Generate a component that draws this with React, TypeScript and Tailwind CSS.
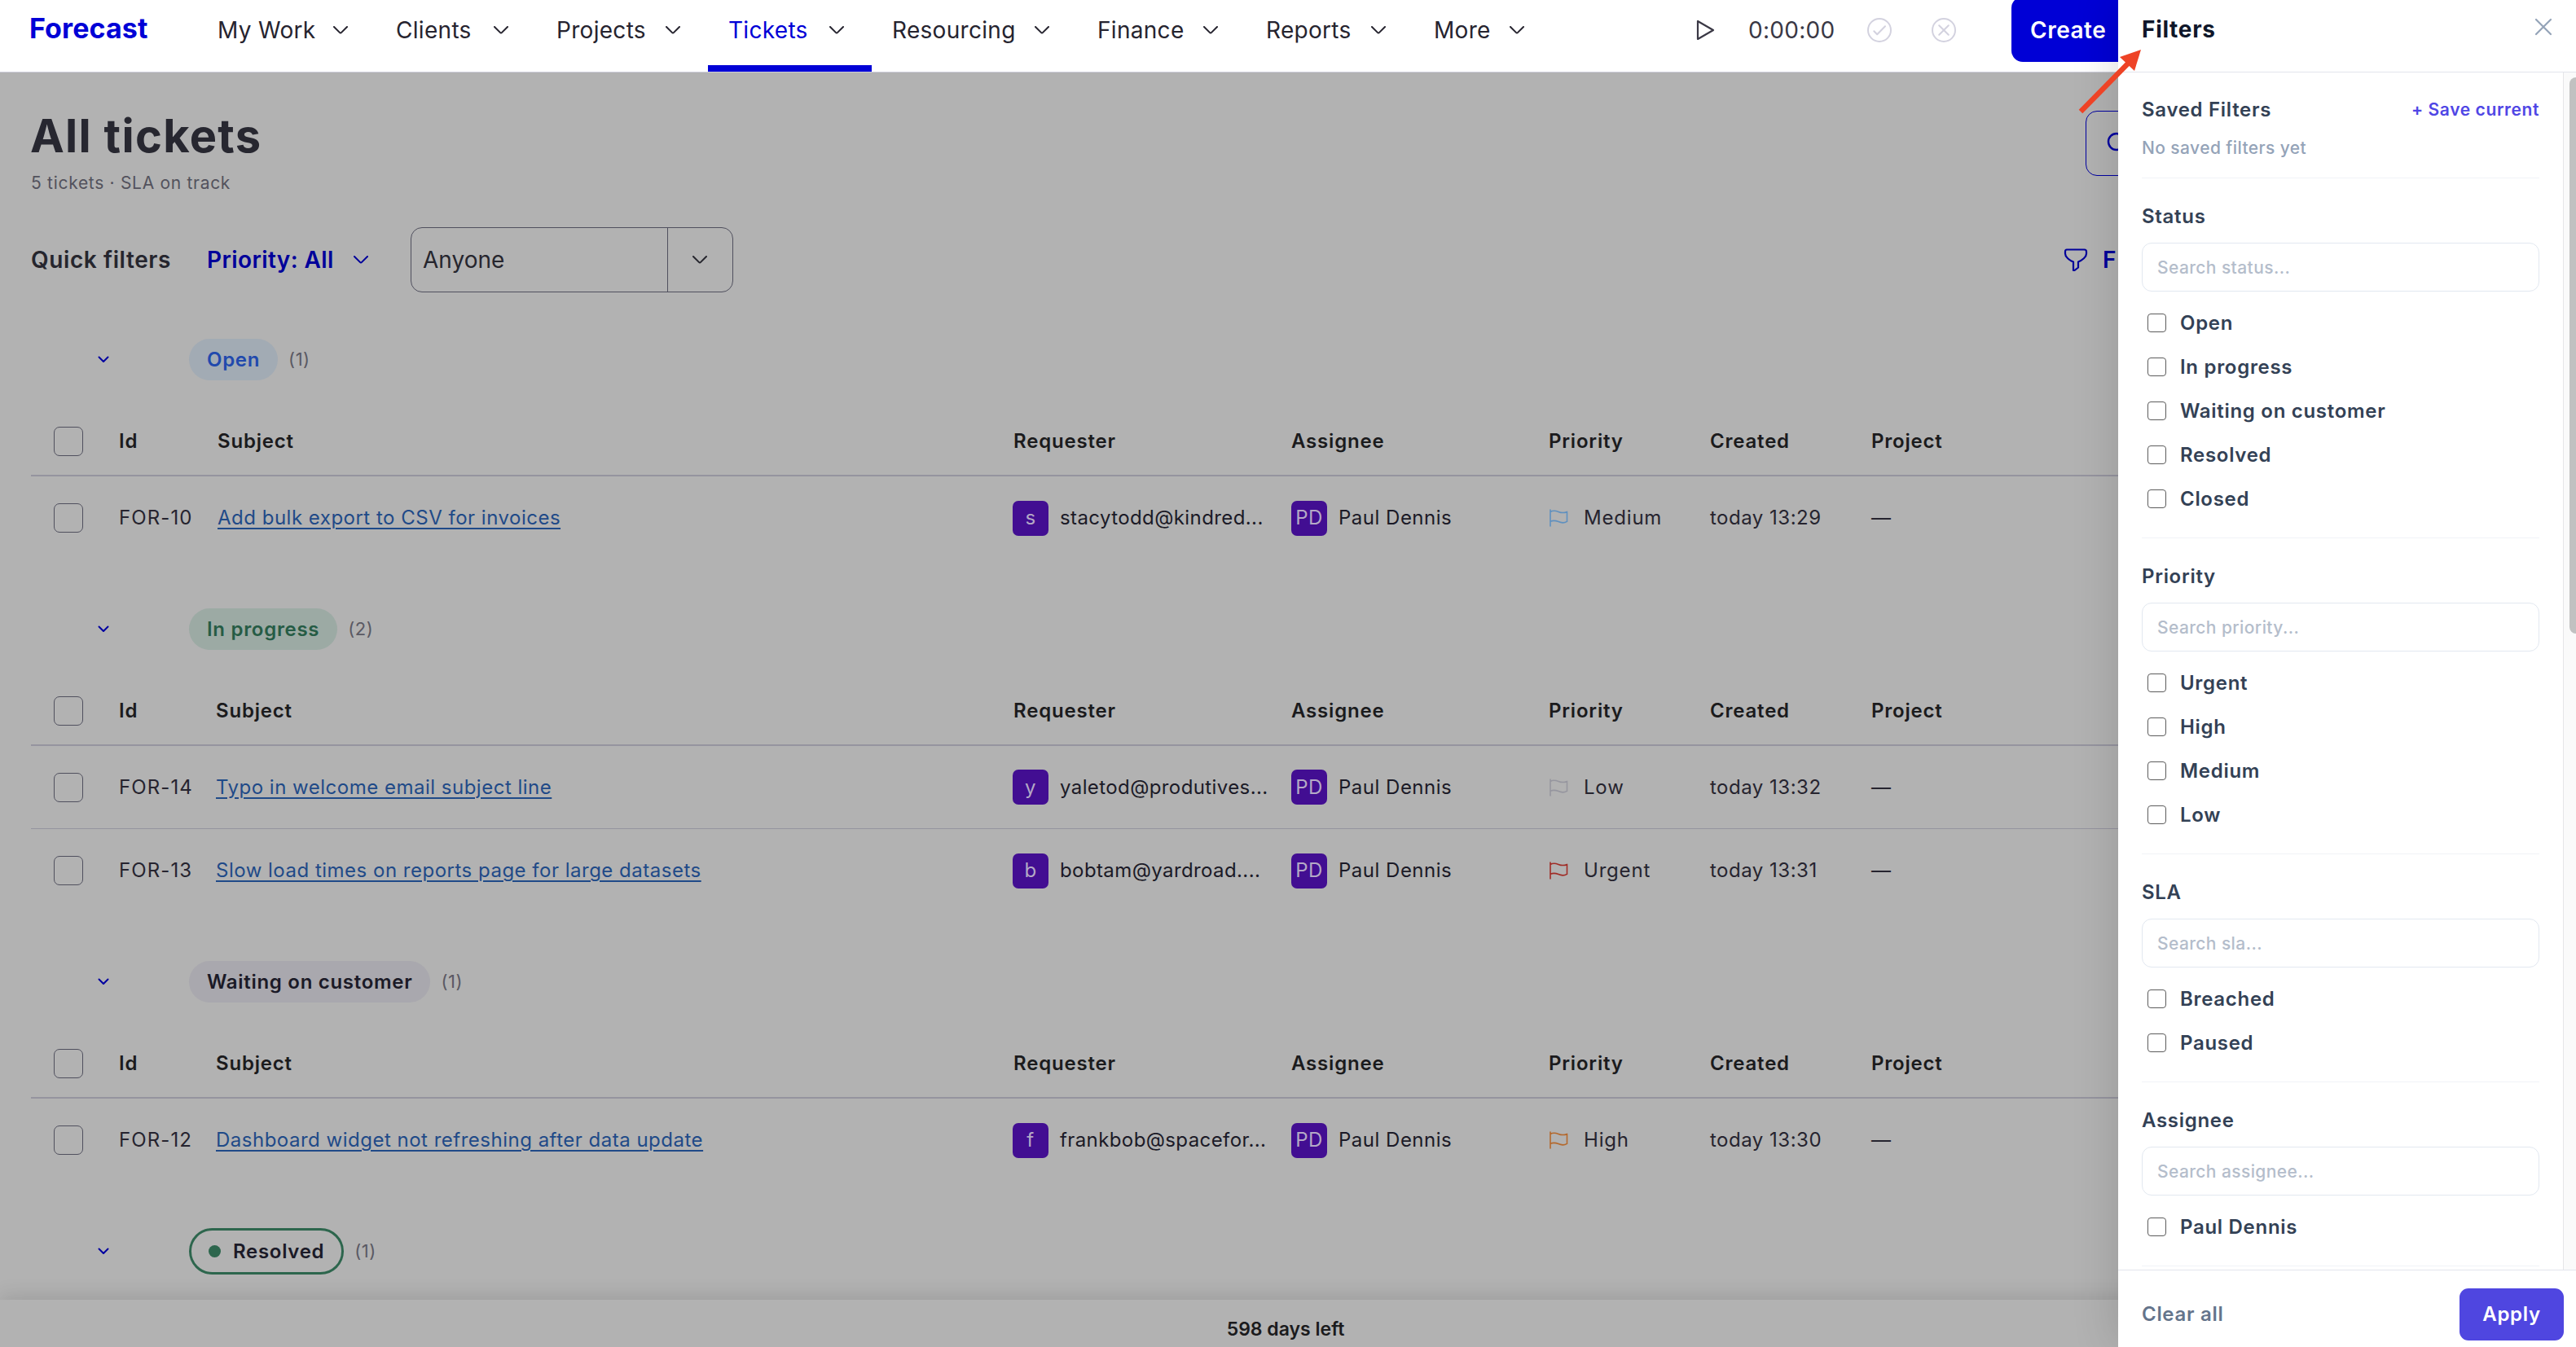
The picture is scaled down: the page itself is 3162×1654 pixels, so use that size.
import type { ReactNode } from 'react';

const navItems = [
  { label: 'My Work', width: 'w-[219px]' },
  { label: 'Clients', width: 'w-[197px]' },
  { label: 'Projects', width: 'w-[211px]' },
  { label: 'Tickets', width: 'w-[201px]', active: true },
  { label: 'Resourcing', width: 'w-[252px]' },
  { label: 'Finance', width: 'w-[207px]' },
  { label: 'Reports', width: 'w-[206px]' },
  { label: 'More', width: 'w-[170px]' },
];

const groups = [
  {
    status: 'Open',
    pill: 'h-[51px] px-[22px] bg-[#a2abb4] text-[#2149ad]',
    cols: 'grid-cols-[109px_120px_977px_341px_316px_198px_198px_1fr]',
    tickets: [
      { id: 'FOR-10', subject: 'Add bulk export to CSV for invoices', requester: 'stacytodd@kindred...', priority: 'Medium', flag: 'text-[#5f90bf]', created: 'today 13:29' },
    ],
  },
  {
    status: 'In progress',
    pill: 'h-[51px] px-[22px] bg-[#9caaa4] text-[#265c45]',
    cols: 'grid-cols-[109px_118px_979px_341px_316px_198px_198px_1fr]',
    tickets: [
      { id: 'FOR-14', subject: 'Typo in welcome email subject line', requester: 'yaletod@produtives...', priority: 'Low', flag: 'text-[#96969f]', created: 'today 13:32' },
      { id: 'FOR-13', subject: 'Slow load times on reports page for large datasets', requester: 'bobtam@yardroad....', priority: 'Urgent', flag: 'text-[#a02c26]', created: 'today 13:31' },
    ],
  },
  {
    status: 'Waiting on customer',
    pill: 'h-[51px] px-[22px] bg-[#a9a8ae] text-[#1b1a27]',
    cols: 'grid-cols-[109px_118px_979px_341px_316px_198px_198px_1fr]',
    tickets: [
      { id: 'FOR-12', subject: 'Dashboard widget not refreshing after data update', requester: 'frankbob@spacefor...', priority: 'High', flag: 'text-[#b4682c]', created: 'today 13:30' },
    ],
  },
  {
    status: 'Resolved',
    pill: 'h-[57px] px-[21px] border-[3px] border-[#2d664d] text-[#1b1a27]',
    dot: true,
    cols: '',
    tickets: [],
  },
];

const sections = [
  { title: 'Status', placeholder: 'Search status...', options: ['Open', 'In progress', 'Waiting on customer', 'Resolved', 'Closed'] },
  { title: 'Priority', placeholder: 'Search priority...', options: ['Urgent', 'High', 'Medium', 'Low'] },
  { title: 'SLA', placeholder: 'Search sla...', options: ['Breached', 'Paused'] },
  { title: 'Assignee', placeholder: 'Search assignee...', options: ['Paul Dennis'] },
];

const Chevron = ({ className = '' }: { className?: string }) => (
  <svg width="18" height="10" viewBox="0 0 18 10" fill="none" className={className}>
    <path d="M1 1 L7.9 7.9 Q9 9 10.1 7.9 L17 1" stroke="currentColor" strokeWidth="2" strokeLinecap="round" />
  </svg>
);

const Flag = ({ className }: { className: string }) => (
  <svg width="24" height="24" viewBox="0 0 24 24" fill="none" className={className}>
    <path
      d="M2 2 V22 M2 4.5 C5 2.6 8.5 3 12 4.4 C15.5 5.8 19 6 22.5 4.4 V16.4 C19 18.4 15.5 18.2 12 16.6 C8.5 15.2 5 15 2 16.4"
      stroke="currentColor"
      strokeWidth="1.6"
      strokeLinecap="round"
      strokeLinejoin="round"
    />
  </svg>
);

const Checkbox = () => <span className="block ml-7 size-9 rounded-[7px] border-[1.5px] border-[#50505e]" />;

const Avatar = ({ children }: { children: ReactNode }) => (
  <span className="flex items-center justify-center w-11 h-[43px] shrink-0 rounded-[7px] bg-[#420e92] text-[#b4a9c6]">{children}</span>
);

const Header = () => (
  <header className="flex h-[89px] bg-white border-b border-[#cdcdda] text-[28px] tracking-[0.3px] text-[#26242f]">
    <div className="w-[242px] h-[69px] pl-[36px] flex items-center text-[34px] font-bold tracking-[0.1px] text-[#0000d6]">Forecast</div>
    <nav className="flex">
      {navItems.map((item) => (
        <div key={item.label} className={`relative h-[88px] pl-[25px] pr-[34px] ${item.width}`}>
          <div className={`flex items-center justify-between h-[74px] ${item.active ? 'text-[#0000d6]' : ''}`}>
            <span className="whitespace-nowrap">{item.label}</span>
            <Chevron className="text-[#26242f]" />
          </div>
          {item.active && <span className="absolute left-0 bottom-0 w-full h-2 bg-[#0000d6]" />}
        </div>
      ))}
    </nav>
    <div className="flex items-center h-[74px] ml-[176px]">
      <svg width="24" height="28" viewBox="0 0 24 28" fill="none" className="text-[#3a3845]">
        <path d="M3 3 V25 L22 14 Z" stroke="currentColor" strokeWidth="2.2" strokeLinejoin="round" />
      </svg>
      <span className="w-[146px] ml-[41px] text-[#3a3845]">0:00:00</span>
      <svg width="30" height="30" viewBox="0 0 30 30" fill="none" stroke="#d3d2df" strokeWidth="2" strokeLinecap="round" strokeLinejoin="round">
        <circle cx="15" cy="15" r="14" />
        <path d="M8.3 16.2 L12.2 20.3 L22 10.3" />
      </svg>
      <svg width="30" height="30" viewBox="0 0 30 30" fill="none" stroke="#d3d2df" strokeWidth="2" strokeLinecap="round" className="ml-[49px]">
        <circle cx="15" cy="15" r="14" />
        <path d="M9.2 9.2 L20.8 20.8 M20.8 9.2 L9.2 20.8" />
      </svg>
    </div>
    <button className="w-[220px] h-20 -mt-1 ml-[68px] pl-[23px] pt-px rounded-[14px] bg-[#0000d6] text-left font-semibold tracking-[0.5px] text-white">Create</button>
  </header>
);

const TicketGroup = ({ group }: { group: (typeof groups)[number] }) => (
  <section className="mb-7 text-[24px] tracking-[0.5px] text-[#26242f]">
    <div className="flex items-center h-[115px] pl-[82px]">
      <svg width="14" height="9" viewBox="0 0 14 9" fill="none">
        <path d="M1.5 1.5 L7 7 L12.5 1.5" stroke="#0000a0" strokeWidth="2" strokeLinecap="round" strokeLinejoin="round" />
      </svg>
      <span className={`flex items-center ml-[98px] rounded-full font-semibold tracking-[0.7px] whitespace-nowrap ${group.pill}`}>
        {group.dot && <span className="size-[15px] mr-[15px] rounded-full bg-[#2d664d]" />}
        {group.status}
      </span>
      <span className="ml-[13px] text-[22px] text-[#5a5963]">({Math.max(group.tickets.length, 1)})</span>
    </div>
    {group.tickets.length > 0 && (
      <>
        <div className={`grid items-center h-[86px] pt-px border-b-2 border-[#95949f] font-semibold tracking-[0.8px] text-[#1b1b1d] ${group.cols}`}>
          <Checkbox />
          <span className="-ml-px">Id</span>
          <span>Subject</span>
          <span>Requester</span>
          <span>Assignee</span>
          <span>Priority</span>
          <span>Created</span>
          <span>Project</span>
        </div>
        {group.tickets.map((ticket) => (
          <div key={ticket.id} className={`grid items-center h-[102px] border-b border-[#95949f] last:border-0 whitespace-nowrap ${group.cols}`}>
            <Checkbox />
            <span className="-ml-px tracking-[1.1px]">{ticket.id}</span>
            <a href="#" className="text-[#1f4a88] underline decoration-2 underline-offset-4">{ticket.subject}</a>
            <span className="flex items-center gap-[14px] -ml-px tracking-[0.4px] text-[#1b1a27]">
              <Avatar>{ticket.requester[0]}</Avatar>
              {ticket.requester}
            </span>
            <span className="flex items-center gap-[14px] text-[#1b1a27]">
              <Avatar>PD</Avatar>
              Paul Dennis
            </span>
            <span className="flex items-center gap-[19px] tracking-[0.8px]">
              <Flag className={ticket.flag} />
              {ticket.priority}
            </span>
            <span>{ticket.created}</span>
            <span>—</span>
          </div>
        ))}
      </>
    )}
  </section>
);

const FilterDrawer = () => (
  <aside className="absolute top-0 right-0 flex flex-col w-[562px] h-[1654px] bg-white text-[24px] font-semibold tracking-[0.7px] text-[#334155] shadow-[-8px_0_48px_rgba(0,0,0,0.12)]">
    <div className="flex justify-between h-[89px] px-[29px] border-b border-[#e2e4ec]">
      <h2 className="h-[73px] leading-[73px] text-[28px] font-bold text-[#0f172a]">Filters</h2>
      <svg width="22" height="22" viewBox="0 0 22 22" className="mt-[22px] text-[#94a3b8]">
        <path d="M2 2 L20 20 M20 2 L2 20" stroke="currentColor" strokeWidth="2.2" strokeLinecap="round" />
      </svg>
    </div>
    <div className="flex h-[1470px] overflow-hidden">
      <div className="w-[546px] shrink-0 px-[29px]">
        <div className="h-[130px] pt-8 border-b border-[#f1f3f7]">
          <div className="flex items-center justify-between h-7">
            <h3>Saved Filters</h3>
            <button className="text-[21px] tracking-[0.6px] text-[#4f46e5]">+ Save current</button>
          </div>
          <p className="mt-[19px] text-[21px] leading-7 font-medium tracking-[0.4px] text-[#94a3b8]">No saved filters yet</p>
        </div>
        {sections.map((section) => (
          <div key={section.title} className="pt-[33px] pb-[21px] border-b border-[#f1f3f7]">
            <h3 className="leading-7">{section.title}</h3>
            <div className="flex items-center mt-[18px] mb-[11px] h-[60px] pt-px pl-[18px] rounded-[12px] border border-[#e2e8f0] text-[21px] font-medium tracking-[0.4px] text-[#b4bdcb]">
              {section.placeholder}
            </div>
            {section.options.map((option) => (
              <label key={option} className="flex items-center h-[54px] pl-[7px]">
                <span className="size-[23px] mr-[17px] rounded-[4px] border border-[#5c5c5c]" />
                <span className="pt-[2px]">{option}</span>
              </label>
            ))}
          </div>
        ))}
      </div>
      <div className="w-4 shrink-0 pt-[6px] pl-[7px] border-l border-[#e6e6e8] bg-[#fafafa]">
        <div className="w-4 h-[683px] rounded-[8px] bg-[#c1c1c1]" />
      </div>
    </div>
    <div className="flex items-center justify-between flex-1 pl-[29px] pr-[15px] pt-[13px] border-t border-[#e2e4ec]">
      <button className="text-[#64748b]">Clear all</button>
      <button className="w-32 h-16 rounded-[11px] bg-[#4f46e0] text-white">Apply</button>
    </div>
  </aside>
);

const App = () => (
  <div className="relative w-[3162px] h-[1654px] overflow-hidden bg-[#b2b2b2] font-['Inter',sans-serif]">
    <Header />
    <main className="h-[1507px] pl-[38px] overflow-hidden text-[#26262e]">
      <div className="flex">
        <div className="w-[2522px]">
          <h1 className="mt-[44px] -ml-px leading-[68px] text-[56px] font-bold tracking-[1.3px] text-[#272730]">All tickets</h1>
          <p className="mt-[10px] text-[21px] leading-7 tracking-[0.7px] text-[#53525d]">5 tickets · SLA on track</p>
        </div>
        <div className="w-[220px] h-20 mt-[47px] pl-[25px] pt-[25px] rounded-[14px] border-[1.5px] border-[#0000a0]">
          <svg width="28" height="28" viewBox="0 0 28 28" fill="none" stroke="#0000a0" strokeWidth="2.4">
            <circle cx="12" cy="12" r="10" />
            <path d="M19 19 L26 26" />
          </svg>
        </div>
      </div>
      <div className="flex items-center h-20 mt-[40px] text-[28px]">
        <span className="w-[216px] font-semibold tracking-[0.6px]">Quick filters</span>
        <span className="flex items-center justify-between w-[198px] font-semibold tracking-[0.4px] text-[#00009a]">
          Priority: All
          <Chevron />
        </span>
        <div className="flex items-center w-[396px] h-20 ml-[52px] rounded-[14px] border-[1.5px] border-[#50505e]">
          <span className="w-[314px] pl-[14px]">Anyone</span>
          <span className="flex items-center justify-center flex-1 h-full pr-px border-l-[1.5px] border-[#50505e]">
            <Chevron />
          </span>
        </div>
        <span className="flex items-center ml-[1633px] font-semibold text-[#00009a]">
          <svg width="30" height="30" viewBox="0 0 30 30" fill="none">
            <path
              d="M4 2.5 H25.5 Q28 2.5 28 5 V7.5 C28 11.5 23 15.5 18 17.5 V24.5 L13.5 28 H12 V17.5 C7 15.5 2 11.5 2 7.5 V5 Q2 2.5 4 2.5 Z"
              stroke="currentColor"
              strokeWidth="2.2"
              strokeLinejoin="round"
            />
          </svg>
          <span className="ml-[18px]">F</span>
        </span>
      </div>
      <div className="mt-[25px]">
        {groups.map((group) => (
          <TicketGroup key={group.status} group={group} />
        ))}
      </div>
    </main>
    <footer className="relative flex items-center justify-center h-[58px] pt-[15px] pr-[6px] bg-[#b2b2b2] text-[23px] font-semibold text-[#1b1b1d] shadow-[0_-4px_24px_rgba(0,0,0,0.12)]">
      598 days left
    </footer>
    <FilterDrawer />
    <svg width="84" height="84" viewBox="0 0 84 84" className="absolute top-[58px] left-[2548px]">
      <path d="M6 79 L64 20" stroke="#ee4326" strokeWidth="6.5" />
      <path d="M80 3 L54 12 L72 29 Z" fill="#ee4326" />
    </svg>
  </div>
);

export default App;
